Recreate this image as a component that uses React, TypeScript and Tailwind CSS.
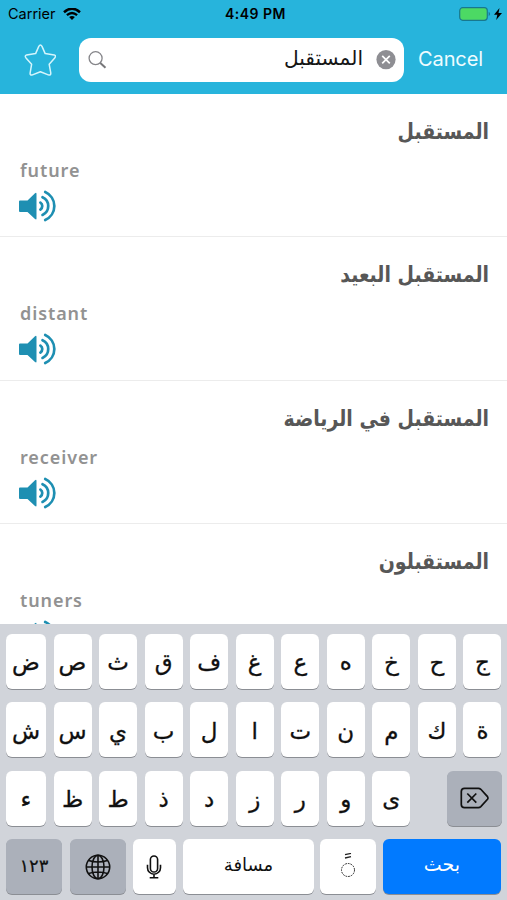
import { type ReactNode } from "react";
import clsx from "clsx";

const results = [
    { arabic: "المستقبل", english: "future" },
    { arabic: "المستقبل البعيد", english: "distant" },
    { arabic: "المستقبل في الرياضة", english: "receiver" },
    { arabic: "المستقبلون", english: "tuners" },
];

const firstRow = ["ض", "ص", "ث", "ق", "ف", "غ", "ع", "ه", "خ", "ح", "ج"];
const secondRow = ["ش", "س", "ي", "ب", "ل", "ا", "ت", "ن", "م", "ك", "ة"];
const thirdRow = ["ء", "ظ", "ط", "ذ", "د", "ز", "ر", "و", "ى"];

const SpeakerIcon = () => (
    <svg className="block h-8 w-[38px]" viewBox="0 0 38 32" fill="none">
        <path
            d="M1 10.5H8.5L16 3.3Q17.5 2 17.5 4V28.5Q17.5 30.2 16 29L8.5 22H1Q0 22 0 21V11.5Q0 10.5 1 10.5Z"
            fill="#1e8fb2"
        />
        <g stroke="#1e8fb2" strokeWidth="2.7" strokeLinecap="round">
            <path d="M21.4 12.6A4.2 4.2 0 0 1 21.4 19.6" />
            <path d="M23.5 7.2A9.7 9.7 0 0 1 23.5 24.9" />
            <path d="M26.2 2A15.3 15.3 0 0 1 26.2 30" />
        </g>
    </svg>
);

const StatusBar = () => (
    <div className="grid h-7 grid-cols-3 items-center pr-[5px] pl-2 text-black">
        <div className="flex items-center gap-[7px]">
            <span className="text-[14.5px] leading-none">Carrier</span>
            <svg className="h-3 w-[18px]" viewBox="0 0 18 12" fill="none">
                <path d="M1 4.2Q9-2.8 17 4.2" stroke="#000" strokeWidth="2.5" />
                <path d="M3.9 7.2Q9 2.8 14.1 7.2" stroke="#000" strokeWidth="2.3" />
                <path d="M6.1 9.1Q9 6.9 11.9 9.1L9 12Z" fill="#000" />
            </svg>
        </div>
        <span className="pl-px text-center text-[14px] leading-none font-semibold tracking-[0.5px]">
            4:49 PM
        </span>
        <div className="flex items-center justify-end gap-[3px]">
            <svg className="h-[14px] w-8" viewBox="0 0 32 14" fill="none">
                <rect
                    x="0.7"
                    y="0.7"
                    width="27.6"
                    height="12.6"
                    rx="3"
                    fill="#4cd964"
                    stroke="#18788f"
                    strokeWidth="1.2"
                />
                <path d="M29.7 4.8Q32.5 7 29.7 9.2Z" fill="#18788f" />
            </svg>
            <svg className="h-3 w-2" viewBox="0 0 8 12">
                <path d="M5.5 0L0 6.8H3.3L2.2 12L8 5H4.5Z" fill="#000" />
            </svg>
        </div>
    </div>
);

const SearchHeader = () => (
    <header className="h-[94px] shrink-0 bg-[#27b4dc]">
        <StatusBar />
        <div className="flex items-center pt-[10px] pl-6">
            <svg className="h-8 w-8" viewBox="0 0 32 32" fill="none">
                <path
                    d="M14.8 2.4Q16.4-.2 18 2.4L21.2 9.6L30.2 10.9Q32.5 11.8 30.7 13.9L25.2 20.3L26.8 29.2Q26.8 31.7 24.3 30.9L16.4 27.7L8.5 30.9Q6 31.7 6.1 29.2L7.6 20.3L2 13.9Q.3 11.8 2.6 10.9L11.6 9.6Z"
                    stroke="#d5f5fc"
                    strokeWidth="1.5"
                    strokeLinejoin="round"
                />
            </svg>
            <div className="ml-[23px] flex h-11 w-[325px] items-center rounded-xl bg-white pr-2 pl-[9px]">
                <svg className="h-[19px] w-[19px]" viewBox="0 0 19 19" fill="none">
                    <circle cx="7.6" cy="7.2" r="6.5" stroke="#858589" strokeWidth="1.3" />
                    <path d="M12.3 11.9L17.5 16.8" stroke="#77777a" strokeWidth="2" />
                </svg>
                <span
                    dir="rtl"
                    className="mr-[13px] flex-1 pb-[3px] font-['DejaVu_Sans',sans-serif] text-[20.2px] leading-none text-[#151515]"
                >
                    المستقبل
                </span>
                <svg className="h-5 w-5" viewBox="0 0 20 20">
                    <circle cx="10" cy="9.6" r="9.6" fill="#8e8e93" />
                    <path
                        d="M6.2 5.8L13.8 13.4M13.8 5.8L6.2 13.4"
                        stroke="#fff"
                        strokeWidth="1.7"
                    />
                </svg>
            </div>
            <span className="ml-[14px] pb-0.5 text-[20px] leading-none tracking-[-0.1px] text-[#effcff]">
                Cancel
            </span>
        </div>
    </header>
);

const ResultRow = ({ arabic, english }: { arabic: string; english: string }) => (
    <li className="h-[143.3px] shrink-0 border-b border-[#ececec] pr-[18px] pl-[19px]">
        <p
            dir="rtl"
            className="h-[62px] origin-right scale-x-[0.86] pt-[22px] font-['DejaVu_Sans',sans-serif] text-[22px] leading-8 font-bold text-[#575757]"
        >
            {arabic}
        </p>
        <p className="h-[34px] pl-px font-['Noto_Sans',sans-serif] text-[18px] leading-7 font-semibold tracking-[0.9px] text-[#929292]">
            {english}
        </p>
        <SpeakerIcon />
    </li>
);

const Key = ({ className, children }: { className?: string; children: ReactNode }) => (
    <div
        className={clsx(
            "flex h-[55px] items-center justify-center rounded-[6px] shadow-[0_1px_0_#8b8e94]",
            className
        )}
    >
        {children}
    </div>
);

const LetterKeys = ({ letters }: { letters: string[] }) => (
    <>
        {letters.map((letter, index) => (
            <Key
                key={letter}
                className={clsx(
                    "shrink-0 bg-white pt-[3px] text-[23px] leading-none [-webkit-text-stroke:0.3px_#101010]",
                    index === 0 ? "w-10" : "w-[38.05px]"
                )}
            >
                {letter}
            </Key>
        ))}
    </>
);

const Keyboard = () => (
    <div className="flex h-[276px] shrink-0 flex-col gap-[13.5px] bg-[#d1d4da] px-[6px] pt-[9.5px] font-['DejaVu_Sans',sans-serif] text-[#101010]">
        <div className="flex gap-[7.5px]">
            <LetterKeys letters={firstRow} />
        </div>
        <div className="flex gap-[7.5px]">
            <LetterKeys letters={secondRow} />
        </div>
        <div className="flex gap-[7.5px]">
            <LetterKeys letters={thirdRow} />
            <Key className="mr-[-0.5px] ml-auto w-[55px] bg-[#abb0ba]">
                <svg className="h-[22px] w-[29px]" viewBox="0 0 29 22" fill="none">
                    <path
                        d="M4.5 1.3H18.3Q19.8 1.3 20.8 2.3L27.5 9.6Q28.4 11 27.5 12.2L20.8 19.6Q19.8 20.6 18.3 20.6H4.5Q1.3 20.6 1.3 17.5V4.5Q1.3 1.3 4.5 1.3Z"
                        stroke="#101010"
                        strokeWidth="1.7"
                    />
                    <path
                        d="M7.3 6.5L16.3 15.7M16.3 6.5L7.3 15.7"
                        stroke="#101010"
                        strokeWidth="1.7"
                    />
                </svg>
            </Key>
        </div>
        <div className="flex">
            <Key className="w-14 bg-[#abb0ba] pb-[3px] text-[18px] [-webkit-text-stroke:0.2px_#101010]">
                ١٢٣
            </Key>
            <Key className="ml-2 w-14 bg-[#abb0ba]">
                <svg
                    className="h-[26px] w-[26px]"
                    viewBox="0 0 26 26"
                    fill="none"
                    stroke="#101010"
                    strokeWidth="1.6"
                >
                    <circle cx="13" cy="13" r="11.7" />
                    <ellipse cx="13" cy="13" rx="6" ry="11.7" />
                    <path d="M13 1V25M1 13H25M3.5 6.5Q13 9.5 22.5 6.5M3.5 19.5Q13 16.5 22.5 19.5" />
                </svg>
            </Key>
            <Key className="ml-[7px] w-[43px] bg-white">
                <svg
                    className="h-6 w-4"
                    viewBox="0 0 16 24"
                    fill="none"
                    stroke="#101010"
                    strokeWidth="1.6"
                >
                    <rect x="4.4" y="1" width="7.2" height="16" rx="3.6" />
                    <path d="M1.5 9.8V12.7A6.5 6.5 0 0 0 14.5 12.7V9.8M8 19.2V22.5M3.7 22.8H12.3" />
                </svg>
            </Key>
            <Key className="ml-[7px] w-[132px] bg-white pb-[5px] text-[18px]">
                مسافة
            </Key>
            <Key className="ml-[6px] w-[55.5px] bg-white">
                <svg
                    className="h-7 w-4"
                    viewBox="0 0 16 28"
                    fill="none"
                    stroke="#222"
                >
                    <path d="M5 1.7L11 0.4M5 5L11 3.7" strokeWidth="1.3" />
                    <circle cx="8" cy="17" r="6.5" strokeDasharray="1.7 1" />
                </svg>
            </Key>
            <Key className="ml-[7px] w-[118.5px] bg-[#017aff] pb-[5px] text-[19px] text-white">
                بحث
            </Key>
        </div>
    </div>
);

const App = () => (
    <main className="flex h-[900px] w-[507px] flex-col overflow-hidden bg-white font-['Inter',sans-serif]">
        <SearchHeader />
        <ul className="flex min-h-0 flex-1 flex-col overflow-hidden">
            {results.map((result) => (
                <ResultRow key={result.english} {...result} />
            ))}
        </ul>
        <Keyboard />
    </main>
);

export default App;
